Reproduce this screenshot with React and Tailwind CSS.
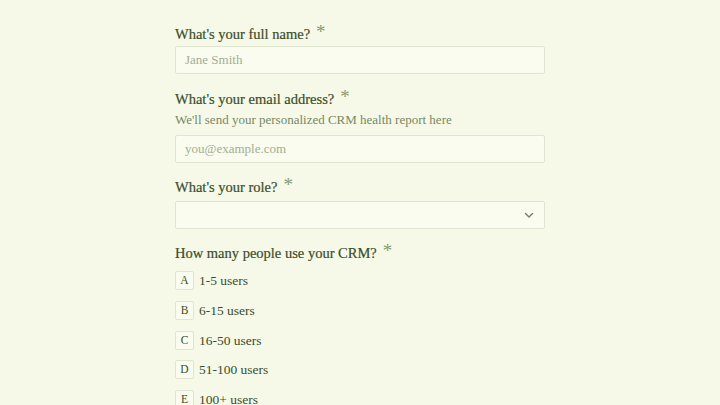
import React from "react";

const options = [
  { key: "A", label: "1-5 users" },
  { key: "B", label: "6-15 users" },
  { key: "C", label: "16-50 users" },
  { key: "D", label: "51-100 users" },
  { key: "E", label: "100+ users" },
];

function Label({ children }) {
  return (
    <div className="flex items-start text-[14.5px] leading-[20px] text-[#3a4d2b]">
      <span className="[-webkit-text-stroke:0.2px_#3a4d2b]">{children}</span>
      <span className="ml-[6px] text-[19px] leading-[16px] text-[#869a74]">*</span>
    </div>
  );
}

export default function App() {
  return (
    <div
      className="min-h-[405px] w-full bg-[#f6f9e7] overflow-hidden"
      style={{ fontFamily: '"Liberation Serif", "DejaVu Serif", serif' }}
    >
      <div className="mx-auto w-[370px] pt-[24px] flex flex-col">
        <Label>What's your full name?</Label>
        <div className="mt-[2px] h-[28px] border border-[#e0e5cf] bg-[#f9fcef] rounded-[2px] px-[9px] flex items-center text-[13px] text-[#a3ad93]">
          Jane Smith
        </div>

        <div className="mt-[15px]">
          <Label>What's your email address?</Label>
        </div>
        <div className="mt-[2px] text-[13px] leading-[18px] text-[#778866]">
          We'll send your personalized CRM health report here
        </div>
        <div className="mt-[6px] h-[28px] border border-[#e0e5cf] bg-[#f9fcef] rounded-[2px] px-[9px] flex items-center text-[13px] text-[#a3ad93]">
          you@example.com
        </div>

        <div className="mt-[14px]">
          <Label>What's your role?</Label>
        </div>
        <div className="mt-[4px] h-[28px] border border-[#e0e5cf] bg-[#f9fcef] rounded-[2px] px-[9px] flex items-center justify-end">
          <svg width="12" height="12" viewBox="0 0 12 12" fill="none" stroke="#6f7f60" strokeWidth="1.4" strokeLinecap="round" strokeLinejoin="round">
            <path d="M2.5 4.5L6 8l3.5-3.5" />
          </svg>
        </div>

        <div className="mt-[14px]">
          <Label>How many people use your CRM?</Label>
        </div>
        <div className="mt-[8px] flex flex-col gap-[10.75px]">
          {options.map((o) => (
            <div key={o.key} className="flex items-center gap-[5px]">
              <div className="w-[19px] h-[19px] border border-[#e0e5cf] bg-[#f9fcef] rounded-[2px] flex items-center justify-center text-[11.5px] leading-[17px] text-[#3a4d2b]">
                {o.key}
              </div>
              <span className="text-[13.5px] leading-[19px] text-[#3a4d2b]">{o.label}</span>
            </div>
          ))}
        </div>
      </div>
    </div>
  );
}
